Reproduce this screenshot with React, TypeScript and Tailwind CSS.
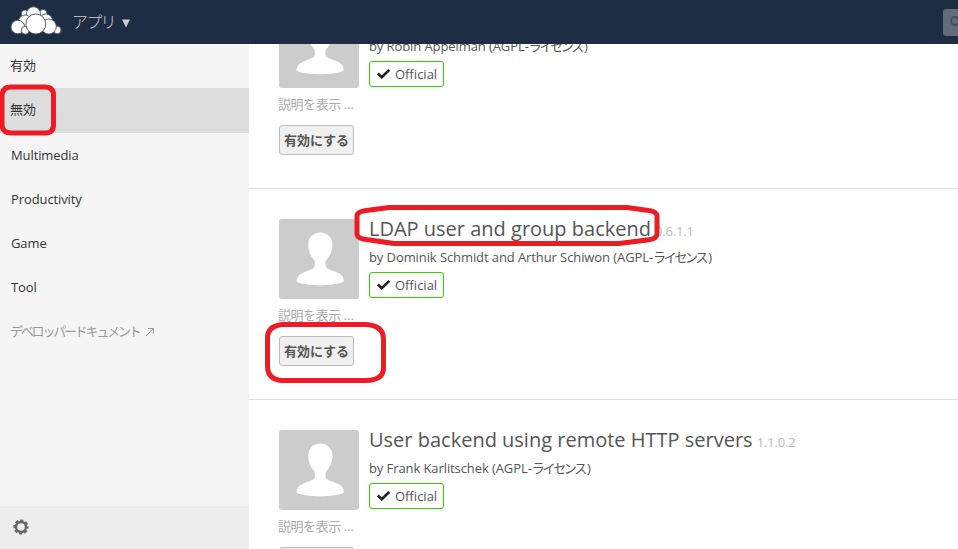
import React from "react";

const FONT = "font-['Open_Sans','Noto_Sans_CJK_JP',sans-serif]";

function Logo() {
  const circles = [
    [25.2, 14, 4],
    [43, 13.5, 4],
    [33.5, 13.8, 7],
    [46, 20.5, 6.5],
    [25, 21.5, 6.5],
    [57.3, 30, 3.8],
    [48.8, 26.5, 7.5],
    [17.8, 27, 6.8],
    [25.3, 30.2, 4],
    [35.8, 24, 10],
  ];
  return (
    <svg width="66" height="44" viewBox="0 0 66 44" className="shrink-0">
      {circles.map(([x, y, r], i) => (
        <circle key={i} cx={x} cy={y} r={r} fill="#fff" stroke="#4b5566" strokeWidth="0.9" />
      ))}
    </svg>
  );
}

function Avatar() {
  return (
    <svg width="80" height="80" viewBox="0 0 80 80" className="block shrink-0 rounded-[3px] bg-[#ccc]">
      <path
        d="M41.300 13.500C34 13.500 29 18.800 29.200 26C29.400 32 31.500 37.500 35.500 41.500C36 44 36 46 35.500 48.500C31 52 21.500 53.500 19 57.500C18 59.500 17.500 61 17.500 62.500C25 67.500 57 67.500 64.800 62.500C64.800 60.500 64.300 58.500 63.300 57C60.500 53 51.500 52 47 48.500C46.300 46 46.300 44 47 41.500C51 37.500 53.400 32 53.500 26C53.600 18.800 48.500 13.500 41.300 13.500Z"
        fill="#fff"
      />
    </svg>
  );
}

function Official() {
  return (
    <div className="mt-[6px] flex h-[26px] w-[75px] items-center rounded-[3px] border border-[#37ce02] pl-[7px]">
      <svg width="13" height="10" viewBox="0 0 13 10" className="shrink-0">
        <path d="M0.800 4.500L4.700 8.300L12.200 1" fill="none" stroke="#222" strokeWidth="2.600" />
      </svg>
      <span className="ml-[5px] text-[13px] leading-[24px] text-[#555]">Official</span>
    </div>
  );
}

type AppInfo = { name?: string; version?: string; author: string };

function AppSection({ name, version, author }: AppInfo) {
  return (
    <section className="h-[211px] border-b border-[#ddd] pt-[30px] pl-[30px] whitespace-nowrap">
      <div className="flex">
        <Avatar />
        <div className="ml-[10px]">
          <h2 className="flex h-[27px] items-baseline text-[20px] leading-[20px] text-[#555]">
            {name}
            <span className="ml-[4px] text-[13px] tracking-[-0.150px] text-[#bbb]">{version}</span>
          </h2>
          <div className="flex h-[20px] text-[13px] leading-[22px] tracking-[-0.090px] text-[#555]">
            by {author} (AGPL-<span className="tracking-[-2.300px]">ライセンス</span><span className="ml-[2px]">)</span>
          </div>
          <Official />
        </div>
      </div>
      <div className="-ml-px mt-[6px] h-[21px] text-[13px] leading-[20px] tracking-[-0.450px] text-[#aaa]">
        説明を表示 <span className="tracking-normal">...</span>
      </div>
      <button className="mt-[10px] block h-[30px] w-[75px] rounded-[3px] border border-[#bbb] bg-[#f0f0f0] text-center text-[13px] leading-[27px] font-bold text-[#555]">
        有効にする
      </button>
    </section>
  );
}

const apps: AppInfo[] = [
  { author: "Robin Appelman" },
  { name: "LDAP user and group backend", version: "0.6.1.1", author: "Dominik Schmidt and Arthur Schiwon" },
  { name: "User backend using remote HTTP servers", version: "1.1.0.2", author: "Frank Karlitschek" },
];

export default function App() {
  return (
    <div className={`relative flex h-[549px] w-[958px] flex-col overflow-hidden bg-white ${FONT}`}>
      <header className="z-10 flex h-[44px] shrink-0 items-center bg-[#1d2d44] text-[#ccc]">
        <Logo />
        <span className="ml-[6px] text-[16px] leading-[44px] font-light tracking-[-1.700px]">アプリ</span>
        <svg width="8" height="9" viewBox="0 0 8 9" className="ml-[7px] mt-[3px]">
          <path d="M0 0.500H8L4 8.500Z" fill="#ccc" />
        </svg>
        <div className="ml-auto h-[27px] w-[15px] rounded-l-[3px] bg-[#626c7b] pt-[5px] pl-[6px]">
          <svg width="9" height="13" viewBox="0 0 9 13" className="block">
            <circle cx="6" cy="7" r="4" fill="none" stroke="#454d5c" strokeWidth="2" />
          </svg>
        </div>
      </header>

      <div className="flex min-h-0 flex-1">
        <nav className="flex w-[249px] shrink-0 flex-col bg-[#f5f5f5] text-[13px] tracking-[-0.100px] text-[#333]">
          <a className="h-[44px] pl-[10px] leading-[43px]">有効</a>
          <a className="h-[45px] bg-[#ddd] pl-[10px] leading-[43px]">無効</a>
          <a className="h-[44px] pl-[11px] leading-[44px]">Multimedia</a>
          <a className="h-[44px] pl-[11px] leading-[44px]">Productivity</a>
          <a className="h-[44px] pl-[11px] leading-[44px]">Game</a>
          <a className="h-[44px] pl-[11px] leading-[44px]">Tool</a>
          <a className="flex h-[44px] items-center pt-px pl-[10px] text-[#999]">
            <span className="tracking-[-2.200px]">デベロッパードキュメント</span>
            <svg width="10" height="10" viewBox="0 0 10 10" className="ml-[5px] mt-px">
              <path d="M1 9L8.500 1.500M3 1.500H8.500V7" fill="none" stroke="#999" strokeWidth="1" />
            </svg>
          </a>
          <div className="mt-auto h-[43px] bg-[#ededed] pt-[13px] pl-[13px]">
            <svg width="16" height="16" viewBox="0 0 16 16" className="block">
              <circle cx="8" cy="8" r="6.500" fill="none" stroke="#666" strokeWidth="2.200" strokeDasharray="3.100 2.005" strokeDashoffset="1.550" />
              <circle cx="8" cy="8" r="5" fill="none" stroke="#666" strokeWidth="2.400" />
            </svg>
          </div>
        </nav>

        <main className="min-w-0 flex-1 overflow-hidden">
          <div className="-mt-[66px]">
            {apps.map((app) => (
              <AppSection key={app.author} {...app} />
            ))}
          </div>
        </main>
      </div>

      <svg className="pointer-events-none absolute inset-0 z-20" width="958" height="549" viewBox="0 0 958 549" fill="none" stroke="#ed1c24" strokeWidth="5" strokeLinejoin="round">
        <path d="M10 87H45Q53.500 87 53.500 95V125Q53.500 133 45 133H11Q2 133 2 124V97Q2 87 10 87Z" />
        <path d="M389 207.500H627L645 210Q657 211 657 216V234Q657 239 647 240L619 243.500H394L370 240Q357 239 357 234V216Q357 211 370 210Z" />
        <path d="M282 324.500H367Q383.500 326 383.500 339V368Q383.500 380 366 380.500H281Q267.500 379 267.500 366V338Q267.500 326 282 324.500Z" />
      </svg>
    </div>
  );
}
